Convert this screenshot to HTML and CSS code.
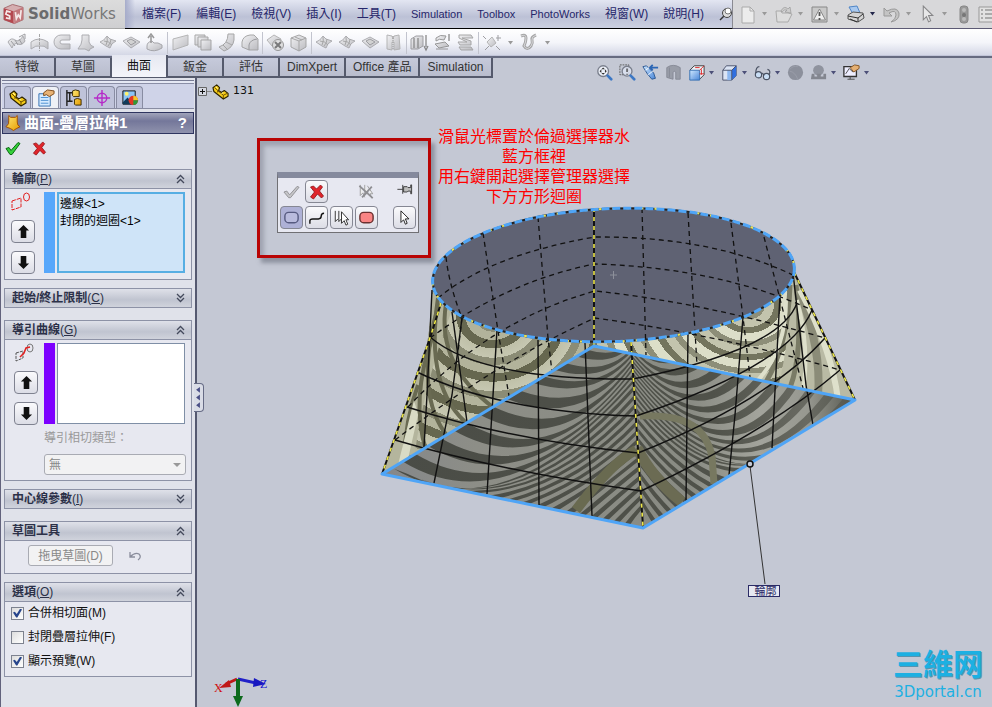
FILE: index.html
```html
<!DOCTYPE html>
<html lang="zh-Hant">
<head>
<meta charset="utf-8">
<title>SolidWorks</title>
<link rel="stylesheet" href="styles.css">
</head>
<body>
<svg class="defs" aria-hidden="true">
  <defs>
    <linearGradient id="silver" x1="0" y1="0" x2="1" y2="1"><stop offset="0" stop-color="#f0f0f2"/><stop offset="1" stop-color="#b4b4b8"/></linearGradient>
    <linearGradient id="gold" x1="0" y1="0" x2="1" y2="1"><stop offset="0" stop-color="#ffe873"/><stop offset="1" stop-color="#e59b00"/></linearGradient>
    <linearGradient id="azure" x1="0" y1="0" x2="1" y2="1"><stop offset="0" stop-color="#cfe8ff"/><stop offset="1" stop-color="#4a86d8"/></linearGradient>
  </defs>
  <symbol id="part" viewBox="0 0 18 18"><path d="M1 5l4-3 3 3-1 3 3 2 3-2 4 3v3l-5 3-10-8z" fill="#f5cc18" stroke="#2c2200" stroke-width="1.2" stroke-linejoin="round"/><path d="M3 5l3 3 6 5 4-2M12 13v3M6 8v2" fill="none" stroke="#6a4c00"/><path d="M4 4l2 2M10 11l2-1" stroke="#fff6a0"/></symbol>
  <symbol id="up" viewBox="0 0 14 16"><path d="M7 1l6 6H10v8H4V7H1z" fill="#111"/></symbol>
  <symbol id="down" viewBox="0 0 14 16"><path d="M7 15l6-6H10V1H4v8H1z" fill="#111"/></symbol>
  <symbol id="collapse" viewBox="0 0 9 10"><path d="M1 5l3.500-3.500L8 5M1 9l3.500-3.500L8 9" fill="none" stroke="#444a5c" stroke-width="1.300"/></symbol>
  <symbol id="expand" viewBox="0 0 9 10"><path d="M1 1l3.500 3.500L8 1M1 5l3.500 3.500L8 5" fill="none" stroke="#444a5c" stroke-width="1.300"/></symbol>
  <symbol id="cross" viewBox="0 0 16 16"><path d="M2 3l3-1 3 3 4-4 2 2-3 4 4 5-2 2-4-4-4 5-3-2 4-5z" fill="#e0252b" stroke="#8d0f14" stroke-width=".8"/></symbol>
  <symbol id="arrow" viewBox="0 0 12 18"><path d="M2 1v13l3-3 2 5 2-1-2-5h4z" fill="#fff" stroke="#111"/></symbol>
  <symbol id="sheet" viewBox="0 0 19 19"><path d="M1 9q3-5 7-2t8-4l2 5q-3 5-7 3t-6 4z" fill="url(#silver)" stroke="#a0a0a4"/><path d="M4 8l4 5M8 7l3 5M12 6l3 5M12 4l6-3v5" fill="none" stroke="#8e8e92"/></symbol>
  <symbol id="revolve" viewBox="0 0 19 19"><path d="M1 16V9q8-6 17 0v7q-4-4-8-3-4-1-9 3z" fill="url(#silver)" stroke="#a2a2a6"/><path d="M9.500 1v17" stroke="#999" stroke-dasharray="3 1"/></symbol>
  <symbol id="sweep" viewBox="0 0 19 19"><path d="M17 2H8a7 7 0 000 14h9v-5H9a2 2 0 010-4h8z" fill="url(#silver)" stroke="#a2a2a6"/></symbol>
  <symbol id="loft" viewBox="0 0 19 19"><path d="M6 2h7v7q1 4 5 5l-4 2-1 2-4-2-7 0q4-5 4-9z" fill="url(#silver)" stroke="#a0a0a4"/></symbol>
  <symbol id="diamond" viewBox="0 0 19 19"><path d="M1 8l8-4 9 5-9 6z" fill="url(#silver)" stroke="#a0a0a4"/><path d="M5 8l4-2 5 3-5 3z" fill="#ccc" stroke="#8e8e92"/></symbol>
  <symbol id="boundary" viewBox="0 0 19 19"><path d="M1 9q4-1 7-6l3 3 6 2q-5 2-6 7l-4-2z" fill="url(#silver)" stroke="#a0a0a4"/><path d="M5 8q5 0 8 4M8 4q1 4-1 8M12 6q0 4-3 7" fill="none" stroke="#999"/></symbol>
  <symbol id="dome" viewBox="0 0 19 19"><path d="M2 13q0-4 5-5l2 2q4-1 8 2v3q-8 5-15 1z" fill="url(#silver)" stroke="#9a9a9e"/><path d="M6 10V3M3 5l3-4 3 4" fill="none" stroke="#888" stroke-width="1.500"/></symbol>
  <symbol id="plane" viewBox="0 0 19 19"><path d="M2 6l15-4v10L2 17z" fill="url(#silver)" stroke="#aaa"/></symbol>
  <symbol id="stack" viewBox="0 0 19 19"><g fill="url(#silver)" stroke="#999"><path d="M1 2h10v10H1z"/><path d="M4 4h10v10H4z"/><path d="M7 7h10v10H7z"/></g></symbol>
  <symbol id="bend" viewBox="0 0 19 19"><path d="M11 1h6v6q-1 8-10 11l-5-4q9-3 9-13z" fill="url(#silver)" stroke="#999"/><path d="M9 9l6 3M6 12l5 5" stroke="#999"/></symbol>
  <symbol id="fillet" viewBox="0 0 19 19"><path d="M2 9q1-6 8-7h4l4 4v11H9l-7-3z" fill="url(#silver)" stroke="#999"/><path d="M9 17v-5q1-5 8-6" fill="none" stroke="#8c8c90"/></symbol>
  <symbol id="remove" viewBox="0 0 19 19"><path d="M1 7l7-5 7 4-2 6-7 1z" fill="url(#silver)" stroke="#aaa"/><circle cx="12" cy="12" r="5.500" fill="#ddd" stroke="#888"/><path d="M9 9l6 6M15 9l-6 6" stroke="#666" stroke-width="2"/></symbol>
  <symbol id="cube" viewBox="0 0 19 19"><path d="M2 5l8-3 7 3v9l-7 4-8-4z" fill="url(#silver)" stroke="#999"/><path d="M2 5l8 3 7-3M10 8v10M6 4l7 3" fill="none" stroke="#999"/></symbol>
  <symbol id="knit" viewBox="0 0 19 19"><path d="M3 2l5 1 1 3 1-3 5-1 1 14-6 1V9H8v8l-5-1z" fill="url(#silver)" stroke="#aaa"/><path d="M9 3v13" stroke="#888" stroke-dasharray="1 1"/></symbol>
  <symbol id="thick" viewBox="0 0 19 19"><path d="M1 6l5-3h7v10l-5 3H1z" fill="url(#silver)" stroke="#909094"/><path d="M4 5v10M8 5v10M16 2v12M14 13l2 4 2-4" fill="none" stroke="#777" stroke-width="1.300"/></symbol>
  <symbol id="thick2" viewBox="0 0 19 19"><path d="M3 5q4-4 10-2l-2 4q-5-2-8 1zM2 11l10-2 4 4-10 2zM3 16l12 0" fill="url(#silver)" stroke="#888"/><path d="M16 1v7" stroke="#888" stroke-width="1.500"/></symbol>
  <symbol id="shells" viewBox="0 0 19 19"><path d="M3 2h12l2 3H6l9 3v4H4L2 9h9L3 5zM3 14h12l2 3H5z" fill="url(#silver)" stroke="#999"/></symbol>
  <symbol id="ref" viewBox="0 0 19 19"><path d="M5 9l5-5 4 6-5 4z" fill="url(#silver)" stroke="#aaa"/><path d="M1 3l3 3M3 17l4-4M14 13l4 4M14 5h5M16 2v6" fill="none" stroke="#909094"/></symbol>
  <symbol id="curve" viewBox="0 0 19 19"><path d="M2 3q5-2 5 2t-2 8q3 5 7 0 2-3 1-6t4-5" fill="none" stroke="#999" stroke-width="3"/><path d="M2 3q5-2 5 2t-2 8q3 5 7 0 2-3 1-6t4-5" fill="none" stroke="#d2d2d5"/></symbol>
  <symbol id="caret" viewBox="0 0 7 4"><path d="M1 0h5L3.500 3.500z" fill="currentColor"/></symbol>
  <symbol id="file" viewBox="0 0 19 19"><path d="M4 2h8l4 4v12H4z" fill="#ececec" stroke="#aaa"/><path d="M12 2v4h4" fill="none" stroke="#aaa"/></symbol>
  <symbol id="open" viewBox="0 0 19 19"><path d="M2 6h5l1 2h6l4 1-4 8H3z" fill="#ddd" stroke="#aaa"/><path d="M7 6q3-6 7-2l2-2 1 6-6-1 2-2q-3-1-5 2z" fill="#ccc" stroke="#999" stroke-width=".7"/></symbol>
  <symbol id="save" viewBox="0 0 19 19"><path d="M2 2h15v15H2z" fill="#c9c9c9" stroke="#888"/><path d="M9.500 4l6 11h-12z" fill="#eee" stroke="#888"/><path d="M9.500 7v4M9.500 13v2" stroke="#555" stroke-width="1.800"/></symbol>
  <symbol id="print" viewBox="0 0 19 19"><path d="M3 2l8-1 3 7-7 1z" fill="#a9c9ef" stroke="#4f86c8"/><path d="M2 10l5-3 10 1 1 5-6 4-10-3z" fill="#d4d4d4" stroke="#555"/><path d="M2 11l10 2 5-4M12 13v4M4 14l7 3" fill="none" stroke="#333"/></symbol>
  <symbol id="undo" viewBox="0 0 19 19"><path d="M2 3v8h8L7 8q7-4 7 2 0 4-5 7 9-2 8-9-2-7-12-2z" fill="#c4c4c4" stroke="#999"/></symbol>
  <symbol id="light" viewBox="0 0 19 19"><rect x="6" y="1" width="8" height="17" rx="3" fill="#999" stroke="#888"/><circle cx="10" cy="5" r="2" fill="#bbb"/><circle cx="10" cy="10" r="2" fill="#777"/><circle cx="10" cy="14" r="2" fill="#bbb"/></symbol>
  <symbol id="props" viewBox="0 0 19 19"><path d="M2 2h17v15H2z" fill="#e2e2e2" stroke="#999"/><path d="M8 5h10M8 9h10M8 13h10M4 5h2M4 9h2M4 13h2" stroke="#999" stroke-width="1.500"/></symbol>
  <symbol id="zoomfit" viewBox="0 0 19 19"><circle cx="8" cy="8" r="6" fill="#eef2fa" stroke="#7a7f8c" stroke-width="1.500"/><path d="M8 4l2 2H6zM8 12l2-2H6zM4 8l2-2v4zM12 8l-2-2v4z" fill="#333"/><path d="M13 13l4 4" stroke="#3c77c4" stroke-width="3" stroke-linecap="round"/></symbol>
  <symbol id="zoomarea" viewBox="0 0 19 19"><path d="M1 1h10v11H1z" fill="none" stroke="#555" stroke-dasharray="2 1"/><circle cx="9" cy="8" r="5.500" fill="#dfe5f2" fill-opacity=".8" stroke="#7a7f8c" stroke-width="1.500"/><path d="M9 5v4M9 11v1" stroke="#444" stroke-width="1.500"/><path d="M13 13l4 4" stroke="#3c77c4" stroke-width="3" stroke-linecap="round"/></symbol>
  <symbol id="scope" viewBox="0 0 19 19"><path d="M1 3l4-1 8 8 2 6-4 1-5-6z" fill="url(#azure)" stroke="#27548f"/><path d="M4 7l4-3M7 12l5-4" stroke="#fff"/><path d="M10 4h8M12 1l-3 3 3 3" fill="none" stroke="#2b66b5" stroke-width="2"/></symbol>
  <symbol id="section" viewBox="0 0 19 19"><path d="M2 4q7-5 15 0v13h-5V9q-2-2-3 0v8l-7-2z" fill="#999da8" stroke="#858995"/><path d="M5 4v11" stroke="#868a96"/></symbol>
  <symbol id="views" viewBox="0 0 19 19"><path d="M2 7l5-5h11v10l-5 5" fill="#eef0f4" stroke="#333"/><path d="M2 7h11v11H2z" fill="url(#azure)" stroke="#2f6bb1"/><path d="M13 7l5-5M15 6v6M13 11h5M8 4h5" stroke="#d22" fill="none"/></symbol>
  <symbol id="shaded" viewBox="0 0 19 19"><path d="M2 7l4-5h11v11l-5 5H2z" fill="#dbe4f4" stroke="#444c66"/><path d="M12 7l5-5v11l-5 5z" fill="#2f6fe0"/><path d="M7 7h5v11H7z" fill="#8db8f0"/><path d="M2 7h10v11M12 7l5-5" fill="none" stroke="#444c66"/></symbol>
  <symbol id="glasses" viewBox="0 0 19 19"><g fill="#c9def5" stroke="#4a5263" stroke-width="1.300"><circle cx="5" cy="12" r="3.500"/><circle cx="14" cy="14" r="3.500"/><path d="M8 11q2-2 3 2M2 10q0-7 4-7M17 12q2-5-2-6" fill="none"/></g></symbol>
  <symbol id="ball" viewBox="0 0 19 19"><circle cx="9.500" cy="9.500" r="8.500" fill="#8c909c"/><path d="M3 6q5-5 9-3M3 8q6 1 9 9" stroke="#9a9eaa" fill="none"/></symbol>
  <symbol id="scene" viewBox="0 0 19 19"><circle cx="9.500" cy="7" r="6" fill="#8f939e"/><path d="M2 11h3v3h3v-3h4v3h3v-3h3v6H1z" fill="#83868f"/></symbol>
  <symbol id="monitor" viewBox="0 0 19 19"><path d="M1 3h14v11H1z" fill="#eef" stroke="#333" stroke-width="1.500"/><path d="M3 11l4-6 4 4 2-3M5 17h8M8 14v3" fill="none" stroke="#444"/><path d="M8 4l5-3 5 1v3l-6 4z" fill="#e5b073" stroke="#82501e"/></symbol>
</svg>

<header class="topbar">
  <div class="brand">
    <svg class="brand-mark" viewBox="0 0 22 22"><path d="M1 5l9-4 11 3v13l-9 4-11-4z" fill="#d5aeb0" stroke="#a56a6e"/><path d="M1 5l10 3v13L1 17z" fill="#b4484f"/><path d="M11 8l10-4v13l-9 4z" fill="#c2777b"/><path d="M8 9l-4-1-1 3 4 2v3l-4-1M13 9l1 7 2-4 2 3 1-8" fill="none" stroke="#f5e8e8" stroke-width="1.800"/></svg>
    <span class="brand-name"><b>Solid</b>Works</span>
  </div>
  <nav class="menu">
    <button>檔案(F)</button><button>編輯(E)</button><button>檢視(V)</button><button>插入(I)</button><button>工具(T)</button><button class="latin">Simulation</button><button class="latin">Toolbox</button><button class="latin">PhotoWorks</button><button>視窗(W)</button><button>說明(H)</button>
    <button class="pin" aria-label="釘選"><svg class="icon-sm" viewBox="0 0 14 14"><path d="M1 13l4-4" stroke="#333" stroke-width="1.500"/><circle cx="8" cy="6" r="4.500" fill="#ddd" stroke="#444"/><circle cx="9" cy="4" r="3" fill="#fff" stroke="#777"/></svg></button>
  </nav>
  <div class="quick">
    <button aria-label="開新檔案"><svg><use href="#file"/></svg></button><svg class="caret dim"><use href="#caret"/></svg>
    <button aria-label="開啟舊檔"><svg><use href="#open"/></svg></button><svg class="caret dim"><use href="#caret"/></svg>
    <button aria-label="儲存"><svg><use href="#save"/></svg></button><svg class="caret dim"><use href="#caret"/></svg>
    <button aria-label="列印"><svg><use href="#print"/></svg></button><svg class="caret"><use href="#caret"/></svg>
    <button aria-label="復原"><svg><use href="#undo"/></svg></button><svg class="caret dim"><use href="#caret"/></svg>
    <button aria-label="選擇"><svg class="faded"><use href="#arrow"/></svg></button><svg class="caret dim"><use href="#caret"/></svg>
    <button aria-label="重新計算"><svg><use href="#light"/></svg></button>
    <button aria-label="選項"><svg><use href="#props"/></svg></button>
  </div>
</header>

<div class="toolbar">
  <button aria-label="伸長曲面"><svg><use href="#sheet"/></svg></button><button aria-label="旋轉曲面"><svg><use href="#revolve"/></svg></button><button aria-label="掃出曲面"><svg><use href="#sweep"/></svg></button><button aria-label="疊層拉伸曲面"><svg><use href="#loft"/></svg></button><button aria-label="邊界曲面"><svg><use href="#boundary"/></svg></button><button aria-label="填補曲面"><svg><use href="#diamond"/></svg></button><button aria-label="自由形態"><svg><use href="#dome"/></svg></button>
  <i class="sep"></i>
  <button aria-label="平坦曲面"><svg><use href="#plane"/></svg></button><button aria-label="偏移曲面"><svg><use href="#stack"/></svg></button><button aria-label="規則曲面"><svg><use href="#bend"/></svg></button><button aria-label="圓角"><svg><use href="#fillet"/></svg></button>
  <i class="sep"></i>
  <button aria-label="刪除面"><svg><use href="#remove"/></svg></button><button aria-label="取代面"><svg><use href="#cube"/></svg></button>
  <i class="sep"></i>
  <button aria-label="延伸曲面"><svg><use href="#boundary"/></svg></button><button aria-label="修剪曲面"><svg><use href="#boundary"/></svg></button><button aria-label="恢復修剪"><svg><use href="#diamond"/></svg></button><button aria-label="縫織曲面"><svg><use href="#knit"/></svg></button>
  <i class="sep"></i>
  <button aria-label="厚面"><svg><use href="#thick"/></svg></button><button aria-label="加厚除料"><svg><use href="#thick2"/></svg></button><button aria-label="曲面除料"><svg><use href="#shells"/></svg></button>
  <i class="sep"></i>
  <button aria-label="參考幾何"><svg><use href="#ref"/></svg></button><svg class="caret grey"><use href="#caret"/></svg>
  <button aria-label="曲線"><svg><use href="#curve"/></svg></button><svg class="caret grey"><use href="#caret"/></svg>
</div>

<div class="command-tabs">
  <button>特徵</button><button>草圖</button><button class="active">曲面</button><button>鈑金</button><button>評估</button><button>DimXpert</button><button>Office 產品</button><button>Simulation</button>
</div>

<main class="workspace">
  <aside class="side">
    <div class="side-tabs">
      <button aria-label="特徵管理員"><svg><use href="#part"/></svg></button>
      <button class="active" aria-label="屬性管理員"><svg viewBox="0 0 19 19"><path d="M2 5h12v13H2z" fill="#d6ebff" stroke="#3570b0"/><path d="M4 9h8M4 12h8M4 15h8" stroke="#4b8fd0"/><path d="M7 4l4-3 7 1v3l-5 3-3-2-3 1z" fill="#e8b274" stroke="#7d4a18"/></svg></button>
      <button aria-label="模型組態"><svg viewBox="0 0 19 19"><path d="M2 1v17M2 4h6M2 13h6M5 4v9" fill="none" stroke="#222" stroke-width="1.500"/><path d="M8 2l3-1 4 1v6H9l-1-1zM10 11l3-1 4 1v6h-6l-1-1z" fill="url(#gold)" stroke="#3a2a00"/></svg></button>
      <button aria-label="尺寸專家"><svg viewBox="0 0 19 19"><circle cx="9.500" cy="9.500" r="5" fill="none" stroke="#b52bc8" stroke-width="1.500"/><path d="M9.500 1v17M1 9.500h17" stroke="#b52bc8" stroke-width="1.500"/></svg></button>
      <button aria-label="顯示管理員"><svg viewBox="0 0 19 19"><path d="M2 2h13v14H2z" fill="#8cc4f5" stroke="#111"/><path d="M2 14l5-5 6 7H2z" fill="#123a5a"/><circle cx="6" cy="5" r="2" fill="#fff36a"/><circle cx="13" cy="12" r="5" fill="#e43525"/><path d="M13 12V7a5 5 0 015 5z" fill="#f5c628"/><path d="M13 12h5a5 5 0 01-5 5z" fill="#2e9a3a"/></svg></button>
    </div>
    <div class="feature-title">
      <svg viewBox="0 0 17 18"><path d="M4 1l2 2h5l2-2v7q0 4 3 5l-4 2-3 2-3-2-5-2q4-3 3-7z" fill="url(#gold)" stroke="#a24c00"/></svg>
      <h1>曲面-疊層拉伸1</h1>
      <button aria-label="說明">?</button>
    </div>
    <div class="confirm">
      <button aria-label="確定"><svg viewBox="0 0 16 14"><path d="M1 7l3-1 2 3 7-8 2 1-8 11H5z" fill="#35d03a" stroke="#0a6b12"/></svg></button>
      <button aria-label="取消"><svg><use href="#cross"/></svg></button>
    </div>

    <section class="group">
      <h2><button><span><b>輪廓</b>(<u>P</u>)</span><svg><use href="#collapse"/></svg></button></h2>
      <div class="picker">
        <div class="picker-tools">
          <svg class="picker-icon" viewBox="0 0 20 20"><path d="M1 9l9-3v9l-9 3z" fill="none" stroke="#e22020" stroke-dasharray="4 1"/><ellipse cx="15.500" cy="5" rx="3" ry="4" fill="none" stroke="#e22020"/></svg>
          <button aria-label="上移"><svg><use href="#up"/></svg></button>
          <button aria-label="下移"><svg><use href="#down"/></svg></button>
        </div>
        <i class="swatch blue"></i>
        <select class="list live" multiple aria-label="輪廓"><option>邊線&lt;1&gt;</option><option>封閉的迴圈&lt;1&gt;</option></select>
      </div>
    </section>
    <section class="group closed"><h2><button><span><b>起始/終止限制</b>(<u>C</u>)</span><svg><use href="#expand"/></svg></button></h2></section>
    <section class="group">
      <h2><button><span><b>導引曲線</b>(<u>G</u>)</span><svg><use href="#collapse"/></svg></button></h2>
      <div class="picker guide">
        <div class="picker-tools">
          <svg class="picker-icon" viewBox="0 0 20 20"><path d="M2 10l7-2v7l-7 3z" fill="none" stroke="#555" stroke-dasharray="3 1"/><ellipse cx="16" cy="5" rx="3" ry="4" fill="none" stroke="#777"/><path d="M6 14l4-4 2-5 4-1" fill="none" stroke="#e22020" stroke-width="1.500"/></svg>
          <button aria-label="上移"><svg><use href="#up"/></svg></button>
          <button aria-label="下移"><svg><use href="#down"/></svg></button>
        </div>
        <i class="swatch violet"></i>
        <select class="list" multiple aria-label="導引曲線"></select>
      </div>
      <div class="tangent">
        <label for="tangent">導引相切類型：</label>
        <select id="tangent" disabled><option>無</option></select>
      </div>
    </section>
    <section class="group closed"><h2><button><span><b>中心線參數</b>(<u>I</u>)</span><svg><use href="#expand"/></svg></button></h2></section>
    <section class="group">
      <h2><button><span><b>草圖工具</b></span><svg><use href="#collapse"/></svg></button></h2>
      <div class="sketch">
        <button class="drag" disabled>拖曳草圖(D)</button>
        <button class="revert" aria-label="復原" disabled><svg viewBox="0 0 14 10"><path d="M2 1v5h5M2 6q5-5 9-3 3 3-1 6" fill="none" stroke="#8a8d9c" stroke-width="1.300"/></svg></button>
      </div>
    </section>
    <section class="group">
      <h2><button><span><b>選項</b>(<u>O</u>)</span><svg><use href="#collapse"/></svg></button></h2>
      <div class="options">
        <label><input type="checkbox" checked>合併相切面(M)</label>
        <label><input type="checkbox">封閉疊層拉伸(F)</label>
        <label><input type="checkbox" checked>顯示預覽(W)</label>
      </div>
    </section>
    <button class="splitter" aria-label="收合面板"><svg viewBox="0 0 8 28"><path d="M6 3v6L2 6zM6 11v6l-4-3zM6 19v6l-4-3z" fill="#4a4f86"/></svg></button>
  </aside>

  <section class="view">
    <svg class="model" viewBox="197 78 795 629" preserveAspectRatio="xMinYMin meet">
      <defs>
        <radialGradient id="bowlL" gradientUnits="userSpaceOnUse" cx="0" cy="0" r="37" spreadMethod="repeat" gradientTransform="translate(493 315) scale(1 .9)">
          <stop offset="0" stop-color="#bfc0a8"/><stop offset=".28" stop-color="#c6c7b1"/><stop offset=".28" stop-color="#8b8c75"/><stop offset=".5" stop-color="#8b8c75"/><stop offset=".5" stop-color="#b2b39b"/><stop offset=".75" stop-color="#b2b39b"/><stop offset=".75" stop-color="#66674f"/><stop offset="1" stop-color="#66674f"/>
        </radialGradient>
        <radialGradient id="bowlR" gradientUnits="userSpaceOnUse" cx="0" cy="0" r="30" spreadMethod="repeat" gradientTransform="translate(748 306) scale(1.100 .9)">
          <stop offset="0" stop-color="#dcdec8"/><stop offset=".3" stop-color="#dcdec8"/><stop offset=".3" stop-color="#8d8e78"/><stop offset=".5" stop-color="#8d8e78"/><stop offset=".5" stop-color="#c3c4ad"/><stop offset=".78" stop-color="#c3c4ad"/><stop offset=".78" stop-color="#74755e"/><stop offset="1" stop-color="#74755e"/>
        </radialGradient>
        <linearGradient id="shade" gradientUnits="userSpaceOnUse" x1="382" y1="0" x2="855" y2="0"><stop offset="0" stop-color="#85878a"/><stop offset=".2" stop-color="#8d8e87"/><stop offset=".65" stop-color="#898b83"/><stop offset=".8" stop-color="#a3a49c"/><stop offset=".9" stop-color="#979890"/><stop offset="1" stop-color="#55574f"/></linearGradient>
        <linearGradient id="band" gradientUnits="userSpaceOnUse" x1="382" y1="0" x2="855" y2="0"><stop offset="0" stop-color="#4a4c46"/><stop offset=".7" stop-color="#50524a"/><stop offset=".9" stop-color="#696a62"/><stop offset="1" stop-color="#55574f"/></linearGradient>
        <clipPath id="leftFace"><path d="M382 474L594 346L632 354L643 528z"/></clipPath>
        <clipPath id="rightFace"><path d="M632 354L855 400L643 528z"/></clipPath>
        <clipPath id="leftShell"><path d="M433 283Q431 320 427 345L382 474L594 346L600 276z"/></clipPath>
        <clipPath id="rightShell"><path d="M594 270L794 270L812 313L855 400L594 346z"/></clipPath>
      </defs>
      <g clip-path="url(#leftShell)">
        <rect x="380" y="270" width="220" height="210" fill="url(#bowlL)"/>
        <path d="M436 300L382 474L415 452Q425 380 452 310z" fill="#b4b59d"/>
        <g fill="none" stroke="#696a52" stroke-width="4"><path d="M438 298Q424 390 470 426"/><path d="M437 310Q414 395 448 437"/><path d="M433 335Q410 400 426 450"/><path d="M446 304Q436 365 494 408"/><path d="M418 385Q405 420 404 462"/></g>
        <path d="M414 400L398 465L408 459L418 415z" fill="#d9dbc5"/>
      </g>
      <g clip-path="url(#rightShell)">
        <rect x="590" y="268" width="270" height="140" fill="url(#bowlR)"/>
        <path d="M793 268Q790 340 778 388L860 402L812 300z" fill="#b9baa4"/>
        <g fill="none" stroke="#7a7b66" stroke-width="5"><path d="M790 285Q788 345 766 382"/><path d="M796 285Q804 350 790 388"/><path d="M799 290Q822 350 818 396" stroke-width="8" stroke="#8b8c78"/></g>
        <g fill="none" stroke="#dee0cb" stroke-width="4"><path d="M786 300Q786 350 758 380"/><path d="M797 300Q810 350 803 390"/><path d="M800 290Q832 350 838 400" stroke-width="6"/></g>
      </g>
      <path d="M382 474L594 346L855 400L643 528z" fill="url(#shade)"/>
      <g id="zebraLeft" clip-path="url(#leftFace)" fill="url(#band)"></g>
      <g id="zebraRight" clip-path="url(#rightFace)" fill="url(#band)"></g>
      <g fill="none" stroke="#6b6b53" stroke-width="7"><path d="M640 416C690 414 706 430 712 456L714 484" stroke="#777860"/><path d="M637 448Q652 478 682 502" stroke-width="11"/><path d="M636 450Q612 462 576 510" stroke-width="10" stroke="#696a50"/></g>
      <ellipse cx="613.500" cy="275" rx="181" ry="66.500" transform="rotate(-2.200 613.500 275)" fill="#5f6273"/>
      <g class="hidden-lines">
        <path d="M446 257Q449 285 462 318L458 352"/><path d="M483 233L498 331L509 396"/><path d="M538 217L548 338L552 372"/><path d="M642 208L646 355"/><path d="M688 213L697 365"/><path d="M731 223L743 317L750 377"/><path d="M764 237L779 295L803 388"/>
        <path d="M438 298Q490 255 595 237Q710 236 793 275"/><path d="M430 338Q510 280 595 264Q720 268 812 310"/><path d="M408 407Q490 320 595 291Q700 302 825 338"/><path d="M395 440Q500 360 595 318Q720 335 840 370"/>
      </g>
      <g class="mesh">
        <path d="M432 290L427 395L424 447"/><path d="M452 312L467 422"/><path d="M462 318L452 395L434 483"/><path d="M497 330L487 494"/><path d="M538 340L539 505"/><path d="M585 343L592 516"/><path d="M688 333L686 501"/><path d="M743 317L735 415L729 475"/><path d="M780 295L772 448"/><path d="M793 273L806 385L813 425"/>
        <path d="M430 337Q480 380 633 379Q780 350 797 303"/><path d="M417 372Q500 412 636 416Q790 365 812 310"/><path d="M407 407Q510 440 638 453Q770 400 825 338"/><path d="M395 440Q500 471 641 491Q770 430 840 370"/>
      </g>
      <g class="seam-base"><path d="M594 208V345"/><path d="M631 342L643 527"/><path d="M441 303L431 335L382 474"/><path d="M794 272L855 400"/></g>
      <g class="seam"><path d="M594 208V345"/><path d="M631 342L643 527"/><path d="M441 303L431 335L382 474"/><path d="M794 272L855 400"/></g>
      <g fill="none" transform="rotate(-2.200 613.500 275)"><ellipse cx="613.500" cy="275" rx="181" ry="66.500" stroke="#222" stroke-width="2"/><ellipse cx="613.500" cy="275" rx="181" ry="66.500" stroke="#e8e35a" stroke-width="2" stroke-dasharray="3 11"/><ellipse cx="613.500" cy="275" rx="181" ry="66.500" stroke="#4fa5f7" stroke-width="3" stroke-dasharray="8 3"/></g>
      <path d="M382 474L594 346L855 400L643 528z" fill="none" stroke="#4fa5f7" stroke-width="3" stroke-linejoin="round"/>
      <path d="M610 275h7M613.500 271v8" stroke="#8d909b"/>
      <path d="M750 466L765 584" stroke="#333"/><circle cx="750" cy="464" r="3" fill="#c4c8d4" stroke="#111" stroke-width="1.500"/>
      <g fill="none"><path d="M238 679L256 683" stroke="#2020c8" stroke-width="3"/><path d="M254 678l12 6-13 3z" fill="#1818c0"/><path d="M237 679L226 684" stroke="#c01818" stroke-width="3"/><path d="M229 680l-10 8 12-1z" fill="#c01818"/><path d="M238 679V698" stroke="#0c6a1c" stroke-width="4"/><path d="M233 696h10l-5 11z" fill="#0c6a1c"/></g>
      <text class="axis red" x="214" y="692">X</text><text class="axis blue" x="260" y="688">Z</text>
    </svg>

    <div class="hud">
      <button aria-label="最適大小"><svg><use href="#zoomfit"/></svg></button><button aria-label="區域放大"><svg><use href="#zoomarea"/></svg></button><button aria-label="前一視角"><svg><use href="#scope"/></svg></button><button aria-label="剖面視角"><svg><use href="#section"/></svg></button>
      <button aria-label="視角方位"><svg><use href="#views"/></svg></button><svg class="caret hud-caret"><use href="#caret"/></svg>
      <button aria-label="顯示樣式"><svg><use href="#shaded"/></svg></button><svg class="caret hud-caret"><use href="#caret"/></svg>
      <button aria-label="隱藏顯示"><svg><use href="#glasses"/></svg></button><svg class="caret hud-caret"><use href="#caret"/></svg>
      <button aria-label="編輯外觀"><svg><use href="#ball"/></svg></button>
      <button aria-label="套用全景"><svg><use href="#scene"/></svg></button><svg class="caret hud-caret"><use href="#caret"/></svg>
      <button aria-label="檢視設定"><svg><use href="#monitor"/></svg></button><svg class="caret hud-caret"><use href="#caret"/></svg>
    </div>

    <div class="tree"><button aria-label="展開"><svg viewBox="0 0 9 9"><path d="M.5.5h8v8h-8z" fill="#d6d9e2" stroke="#666"/><path d="M2 4.500h5M4.500 2v5" stroke="#111"/></svg></button><i></i><svg class="tree-part"><use href="#part"/></svg><span>131</span></div>

    <div class="highlight">
      <div class="palette">
        <div class="palette-row">
          <button class="flat" aria-label="確定"><svg viewBox="0 0 18 16"><path d="M1 8l3-1 3 4 8-9 2 1L8 14H6z" fill="#c5c5c8" stroke="#929296"/></svg></button>
          <button aria-label="取消"><svg><use href="#cross"/></svg></button>
          <button class="flat push" aria-label="清除選擇"><svg viewBox="0 0 18 18"><path d="M2 1v12l3-3 2 5M7 1v12l4-4M10 2l6 9h-3l2 5" fill="#eee" stroke="#999"/><path d="M1 2l15 14M15 3L4 15" stroke="#8e8e92" stroke-width="2"/></svg></button>
          <button class="flat pin-right" aria-label="釘選"><svg viewBox="0 0 18 18"><path d="M1 6h6M7 1v10M8 3h4l1 1h3V1h1v10h-1V8h-3l-1 1H8z" fill="#bbb" stroke="#333"/></svg></button>
        </div>
        <div class="palette-row">
          <button class="pressed" aria-label="封閉迴圈"><svg viewBox="0 0 18 16"><rect x="2" y="2" width="14" height="11" rx="4" fill="#b9bbdd" stroke="#565a80" stroke-width="1.500"/></svg></button>
          <button aria-label="開放迴圈"><svg viewBox="0 0 18 16"><path d="M2 14v-3q0-2 3-2h6q3 0 3-3 0-3 3-3" fill="none" stroke="#111" stroke-width="1.500"/></svg></button>
          <button aria-label="群組"><svg viewBox="0 0 18 18"><path d="M2 1v12l3-3M6 1v12l3-3M9 2v13l3-3 2 5 2-1-2-5h3z" fill="#fff" stroke="#222"/></svg></button>
          <button aria-label="區域"><svg viewBox="0 0 18 16"><rect x="2" y="2" width="14" height="11" rx="4" fill="#f98484" stroke="#6a3030" stroke-width="1.500"/></svg></button>
          <button class="pin-right" aria-label="標準選擇"><svg><use href="#arrow"/></svg></button>
        </div>
      </div>
    </div>

    <p class="note">滑鼠光標置於倫過選擇器水<br>藍方框裡<br>用右鍵開起選擇管理器選擇<br>下方方形迴圈</p>
    <span class="callout">輪廓</span>
    <div class="watermark"><b>三維网</b><span>3Dportal.cn</span></div>
  </section>
</main>
<script src="zebra.js"></script>
</body>
</html>
```
FILE: styles.css
```css
* { box-sizing: border-box; }
body {
  margin: 0;
  min-height: 100vh;
  display: flex;
  flex-direction: column;
  overflow: hidden;
  background: #c4c8d4;
  color: #111;
  font: 12px/16px "Liberation Sans", "Noto Sans CJK TC", sans-serif;
}
button { margin: 0; padding: 0; border: 0; background: none; color: inherit; font: inherit; white-space: nowrap; }
svg { display: block; flex: none; }
.defs { position: absolute; width: 0; height: 0; }
.caret { width: 7px; height: 4px; color: #22264a; }
.caret.dim, .caret.grey { color: #999; }

/* Title row */
.topbar { display: flex; height: 29px; background: #d8d8da; }
.brand { display: flex; align-items: center; gap: 4px; width: 125px; padding-left: 3px; background: linear-gradient(#dcdcdc, #cfcfd1); border-bottom: 1px solid #aaa; }
.brand-mark { width: 21px; height: 22px; }
.brand-name { font: 15px/20px "DejaVu Sans", sans-serif; color: #777; }
.brand-name b { color: #6b6b6d; }
.menu { display: flex; align-items: center; gap: 15px; width: 608px; padding: 0 0 0 17px; background: linear-gradient(90deg, #a6acca, rgba(166,172,202,0) 10px), linear-gradient(#e3e6f2, #bcc1d6 60%, #ccd0e0); border-bottom: 1px solid #000; border-right: 1px solid #8a8a92; color: #26266a; }
.menu .latin { font-size: 11px; }
.menu .pin { margin-left: auto; margin-right: 5px; }
.icon-sm { width: 14px; height: 14px; }
.quick { display: flex; flex: 1; align-items: center; padding-left: 3px; border-bottom: 1px solid #5c5a74; overflow: hidden; }
.quick button { flex: none; width: 23px; display: flex; justify-content: center; }
.quick button svg, .toolbar button svg { width: 19px; height: 19px; }
.quick .caret { margin: 0 4px 0 2px; }
.faded { opacity: .4; }

/* Surface tools */
.toolbar { display: flex; align-items: center; height: 29px; padding-left: 5px; background: linear-gradient(#fff, #f4f5fa 50%, #d5d8e6 95%, #b6bad0); border-bottom: 2px solid #666b80; }
.toolbar button { width: 23px; display: flex; justify-content: center; opacity: .85; }
.sep { width: 1px; height: 22px; margin: 0 1px; background: #c2c4ce; }
.toolbar .caret { margin: 0 3px 0 4px; }

.command-tabs { display: flex; align-items: stretch; height: 20px; color: #333; }
.command-tabs button { min-width: 56px; padding: 0 7px 1px; background: linear-gradient(#c6cadb, #b9bdcd); border-right: 2px solid #555a6c; border-bottom: 2px solid #555a6c; }
.command-tabs .active { margin-top: -3px; height: 24px; background: linear-gradient(#e6e8f1, #f4f5fa); color: #111; }

/* Property panel */
.workspace { display: flex; flex: 1; }
.side { position: relative; display: flex; flex-direction: column; width: 197px; padding: 2px 3px 0 3px; background: #e0e2ea; border-left: 1px solid #62627c; border-right: 2px solid #555970; }
.side-tabs { display: flex; align-items: flex-end; gap: 1px; height: 29px; margin: 0 -2px 3px; padding: 0 2px; background: #cfd3e8; border-top: 1px solid #777b94; border-bottom: 1px solid #888ca2; box-shadow: inset 0 2px #e5e8f4, inset 0 3px #8a8ea6; }
.side-tabs button { width: 27px; height: 22px; display: flex; align-items: center; justify-content: center; background: #bfc3da; border: 1px solid #888ca2; border-bottom: 0; border-radius: 4px 4px 0 0; }
.side-tabs .active { background: #eef0f6; }
.side-tabs svg { width: 18px; height: 18px; }
.feature-title { display: flex; align-items: center; gap: 3px; height: 22px; margin: 0 -2px; padding: 0 6px 0 2px; background: linear-gradient(#a1a4bb, #74779a 40%, #8f92ad); border: 1px solid #2f3560; color: #fff; }
.feature-title svg { width: 16px; height: 18px; }
.feature-title h1 { flex: 1; margin: 0; font-size: 15px; line-height: 20px; }
.feature-title button { font-size: 15px; font-weight: bold; }
.confirm { display: flex; align-items: center; gap: 10px; height: 28px; padding-left: 1px; margin-bottom: 7px; }
.confirm svg { width: 16px; height: 15px; }

.group { margin-bottom: 8px; background: #e7e8f0; border: 1px solid #8d92a6; }
.group.closed { margin-bottom: 12px; }
.group h2 { margin: 0; font-size: 12px; line-height: 17px; font-weight: normal; color: #2c3148; }
.group h2 button { display: flex; align-items: center; justify-content: space-between; width: 100%; height: 19px; padding: 0 6px 0 7px; background: linear-gradient(#dfe1e9, #c0c4d0 60%, #d0d3dc); border-bottom: 1px solid #8d92a6; }
.group.closed h2 button { height: 18px; border-bottom: 0; }
.group h2 svg { width: 9px; height: 10px; }
.picker { display: flex; padding: 3px 6px 5px; }
.picker-tools { display: flex; flex-direction: column; gap: 8px; width: 33px; }
.picker-icon { width: 20px; height: 20px; }
.picker-tools button { width: 24px; height: 23px; display: flex; align-items: center; justify-content: center; background: linear-gradient(#fafafc, #dcdde6); border: 1px solid #7f8290; border-radius: 4px; }
.picker-tools button svg { width: 13px; height: 15px; }
.swatch { width: 11px; height: 81px; margin-right: 2px; }
.blue { background: #57a7fb; }
.violet { background: #7d00ff; }
.list { flex: 1; min-width: 0; height: 81px; margin: 0; padding: 0 1px; background: #fff; border: 1px solid #7f8fa6; border-radius: 0; outline: 0; font: inherit; overflow: hidden; }
.list.live { background: #cfe4f8; border: 2px solid #57aee3; }
.list option { padding: 0; min-height: 16px; line-height: 16px; }
.guide { padding-left: 9px; padding-bottom: 0; }
.guide .picker-tools { width: 30px; }
.tangent { position: relative; display: flex; flex-direction: column; gap: 8px; padding: 5px 5px 5px 39px; color: #999; }
.tangent select { height: 21px; padding: 0 4px; appearance: none; border: 1px solid #a9abb3; border-radius: 3px; background: #f2f2f3; color: #888; font: inherit; opacity: 1; }
.tangent::after { content: ""; position: absolute; right: 10px; bottom: 13px; border: 4px solid transparent; border-top-color: #999; border-bottom: 0; }
.sketch { display: flex; align-items: center; gap: 15px; padding: 4px 0 7px 23px; }
.drag { width: 85px; height: 21px; background: #f2f2f3; border: 1px solid #a9abb3; border-radius: 3px; color: #888; }
.revert svg { width: 14px; height: 10px; }
.options { display: flex; flex-direction: column; gap: 8px; padding: 3px 6px 7px; }
.options label { display: flex; align-items: center; gap: 4px; }
.options input { appearance: none; position: relative; width: 13px; height: 13px; margin: 0; border: 1px solid #7d828f; background: linear-gradient(135deg, #ddd, #fff); }
.options input:checked::before { content: ""; position: absolute; inset: 1px; background: #27458c; clip-path: polygon(0 45%, 20% 35%, 42% 60%, 80% 0, 100% 10%, 48% 100%, 35% 100%); }
.splitter { position: absolute; right: -9px; top: 305px; width: 10px; height: 29px; background: #d9dce6; border: 1px solid #666b85; border-left: 0; border-radius: 0 4px 4px 0; }
.splitter svg { width: 8px; height: 27px; }

/* Graphics area */
.view { position: relative; flex: 1; font-size: 12px; }
.model { width: 100%; height: auto; }
.hidden-lines, .mesh, .seam, .seam-base { fill: none; stroke: #111; stroke-width: 1.3; }
.hidden-lines { stroke-dasharray: 5 4; }
.mesh { stroke-width: 1.4; }
.seam-base { stroke-width: 2; }
.seam { stroke: #efe94a; stroke-dasharray: 4 5; stroke-width: 1.6; }
.axis { font: 12px "Liberation Serif", serif; }
.axis.red { fill: #d01010; }
.axis.blue { fill: #1818d0; }
.hud { position: absolute; left: 396px; top: -15px; display: flex; align-items: center; height: 19px; }
.hud button { width: 23px; display: flex; justify-content: center; }
.hud button svg { width: 17px; height: 17px; }
.hud .hud-caret { margin: 0 3px 0 0; color: #4c5078; }
.tree { position: absolute; left: 1px; top: 4px; display: flex; align-items: center; font: 11px/18px "DejaVu Sans", sans-serif; }
.tree button svg { width: 9px; height: 9px; }
.tree i { width: 5px; height: 1px; background: #888; }
.tree-part { width: 17px; height: 17px; margin-right: 4px; }
.highlight { position: absolute; left: 60px; top: 60px; padding: 31px 9px 22px 17px; border: 3px solid #b90404; box-shadow: 4px 5px 4px rgba(90,95,110,.5), inset 4px 5px 4px rgba(90,95,110,.35); }
.palette { width: 142px; padding: 2px; background: #e7e8f1; border: 1px solid #707074; border-top: 6px solid #858a9d; }
.palette-row { display: flex; gap: 2px; height: 24px; }
.palette-row + .palette-row { margin-top: 2px; }
.palette-row button { width: 23px; height: 23px; display: flex; align-items: center; justify-content: center; background: linear-gradient(#fafafc, #dcdde6); border: 1px solid #858793; border-radius: 4px; }
.palette-row .flat { background: none; border: 0; }
.palette-row .pressed { background: #aeb1d6; }
.palette-row svg { width: 17px; height: 16px; }
.palette-row .push { margin-left: 25px; }
.palette-row .pin-right { margin-left: auto; }
.note { position: absolute; left: 241px; top: 49px; margin: 0; color: #f00; font: 16px/20px "Liberation Sans", "Noto Sans CJK TC", sans-serif; text-align: center; white-space: nowrap; }
.callout { position: absolute; left: 551px; top: 507px; width: 32px; height: 12px; padding-left: 3px; background: #e6e8f1; border: 1px solid #2b2b66; color: #2b2b66; font-size: 11px; line-height: 10px; text-align: center; }
.watermark { position: absolute; right: 9px; bottom: 7px; display: flex; flex-direction: column; align-items: center; gap: 4px; color: #1db0e2; text-shadow: 1px 1px #5a93ad; }
.watermark b { font: bold 30px/30px "Liberation Sans", "Noto Sans CJK TC", sans-serif; }
.watermark span { font: 15px/16px "DejaVu Sans", sans-serif; text-shadow: none; }
```
FILE: zebra.js
```js
// Zebra stripes: each key is [t, start, control, end] of a quadratic curve.
const leftKeys = [
  [0, 588, 350, 615, 358, 632, 343],
  [0.12, 530, 385, 595, 404, 633, 356],
  [0.22, 470, 420, 560, 470, 633, 366],
  [0.36, 392, 468, 500, 535, 634, 385],
  [0.52, 480, 502, 572, 486, 637, 415],
  [0.75, 565, 520, 612, 482, 640, 460],
  [1, 632, 532, 636, 522, 643, 513]
];
const rightKeys = [
  [0, 632, 343, 648, 360, 668, 358],
  [0.15, 633, 358, 690, 430, 745, 374],
  [0.3, 633, 371, 730, 495, 800, 386],
  [0.45, 635, 388, 745, 535, 864, 398],
  [0.6, 637, 410, 690, 475, 745, 488],
  [0.8, 640, 455, 668, 492, 700, 518],
  [1, 643, 513, 648, 524, 652, 532]
];

function curveAt(keys, t) {
  let i = 1;
  while (i < keys.length - 1 && keys[i][0] < t) i++;
  const a = keys[i - 1];
  const b = keys[i];
  const f = (t - a[0]) / (b[0] - a[0]);
  return a.slice(1).map((v, n) => (v + (b[n + 1] - v) * f).toFixed(1));
}

function drawStripes(id, keys, count) {
  const group = document.getElementById(id);
  for (let i = 0; i < count; i++) {
    const p = curveAt(keys, i / count);
    const q = curveAt(keys, (i + 0.5) / count);
    const path = document.createElementNS("http://www.w3.org/2000/svg", "path");
    path.setAttribute("d", `M${p[0]} ${p[1]}Q${p[2]} ${p[3]} ${p[4]} ${p[5]}L${q[4]} ${q[5]}Q${q[2]} ${q[3]} ${q[0]} ${q[1]}z`);
    group.append(path);
  }
}

drawStripes("zebraLeft", leftKeys, 22);
drawStripes("zebraRight", rightKeys, 22);
```
